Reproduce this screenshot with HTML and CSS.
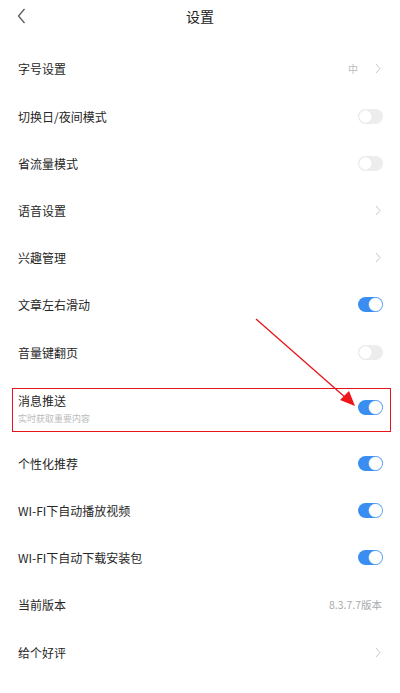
FILE: index.html
```html
<!DOCTYPE html>
<html lang="zh-CN">
<head>
  <meta charset="UTF-8">
  <meta name="viewport" content="width=device-width, initial-scale=1.0">
  <title>设置</title>
  <link rel="stylesheet" href="styles.css">
</head>
<body>
  <header class="top-bar">
    <span class="back">
      <svg width="9" height="16" viewBox="0 0 9 16"><polyline points="7.5,1 1.5,8 7.5,15" fill="none" stroke="#555" stroke-width="1.2"/></svg>
    </span>
    <h1>设置</h1>
  </header>

  <div class="settings">
    <div class="row">
      <span class="label">字号设置</span>
      <span class="extra">
        <span class="value">中</span>
        <svg class="arrow" width="6" height="11" viewBox="0 0 6 11"><polyline points="1,1 5,5.5 1,10" fill="none" stroke="#c8c8c8" stroke-width="1"/></svg>
      </span>
    </div>
    <div class="row">
      <span class="label">切换日/夜间模式</span>
      <span class="switch"></span>
    </div>
    <div class="row">
      <span class="label">省流量模式</span>
      <span class="switch"></span>
    </div>
    <div class="row">
      <span class="label">语音设置</span>
      <svg class="arrow" width="6" height="11" viewBox="0 0 6 11"><polyline points="1,1 5,5.5 1,10" fill="none" stroke="#c8c8c8" stroke-width="1"/></svg>
    </div>
    <div class="row">
      <span class="label">兴趣管理</span>
      <svg class="arrow" width="6" height="11" viewBox="0 0 6 11"><polyline points="1,1 5,5.5 1,10" fill="none" stroke="#c8c8c8" stroke-width="1"/></svg>
    </div>
    <div class="row">
      <span class="label">文章左右滑动</span>
      <span class="switch on"></span>
    </div>
    <div class="row">
      <span class="label">音量键翻页</span>
      <span class="switch"></span>
    </div>
    <div class="row tall">
      <div class="marked"></div>
      <div class="text">
        <span class="label">消息推送</span>
        <span class="sub">实时获取重要内容</span>
      </div>
      <span class="switch on"></span>
    </div>
    <div class="row">
      <span class="label">个性化推荐</span>
      <span class="switch on"></span>
    </div>
    <div class="row">
      <span class="label">WI-FI下自动播放视频</span>
      <span class="switch on"></span>
    </div>
    <div class="row">
      <span class="label">WI-FI下自动下载安装包</span>
      <span class="switch on"></span>
    </div>
    <div class="row">
      <span class="label">当前版本</span>
      <span class="version">8.3.7.7版本</span>
    </div>
    <div class="row">
      <span class="label">给个好评</span>
      <svg class="arrow" width="6" height="11" viewBox="0 0 6 11"><polyline points="1,1 5,5.5 1,10" fill="none" stroke="#c8c8c8" stroke-width="1"/></svg>
    </div>
  </div>

  <svg class="pointer" width="400" height="693" viewBox="0 0 400 693">
    <line x1="256" y1="319" x2="346" y2="398" stroke="#e8141b" stroke-width="1.3"/>
    <polygon points="355,406 340,400 349,391" fill="#f0141b"/>
  </svg>
</body>
</html>
```

FILE: styles.css
```css
body {
  margin: 0;
  padding: 0;
  background-color: #fff;
  font-family: "Noto Sans CJK SC", "Noto Sans", sans-serif;
  color: #333;
  position: relative;
  width: 400px;
  height: 693px;
  overflow: hidden;
}
.top-bar {
  height: 32px;
  display: flex;
  align-items: center;
  justify-content: center;
  position: relative;
}
.top-bar h1 {
  margin: 0;
  font-size: 14px;
  font-weight: normal;
  color: #222;
}
.back {
  position: absolute;
  left: 17px;
  top: 8px;
  display: flex;
}
.settings {
  margin-top: 13.4px;
}
.row {
  height: 47.2px;
  padding: 0 17px 0 18px;
  display: flex;
  align-items: center;
  justify-content: space-between;
  position: relative;
}
.row.tall {
  height: 64px;
}
.label {
  font-size: 12px;
  line-height: 17px;
  color: #262626;
}
.text {
  display: flex;
  flex-direction: column;
  margin-top: 1px;
}
.sub {
  font-size: 9px;
  line-height: 13px;
  color: #bbb;
  margin-top: 3px;
}
.marked {
  position: absolute;
  left: 12px;
  right: 9px;
  top: 12px;
  height: 42px;
  border: 1.5px solid #e8141b;
}
.extra {
  display: flex;
  align-items: center;
}
.value {
  font-size: 10px;
  color: #bbb;
  margin-right: 17px;
}
.arrow {
  margin-right: 2px;
}
.version {
  font-size: 10.5px;
  color: #aaa;
  margin-right: 1px;
}
.switch {
  width: 25px;
  height: 15px;
  border-radius: 8px;
  background-color: #ededed;
  position: relative;
  box-sizing: border-box;
}
.switch::after {
  content: "";
  position: absolute;
  left: 1px;
  top: 1px;
  width: 13px;
  height: 13px;
  border-radius: 50%;
  background-color: #fff;
  box-shadow: 0 0 1px rgba(0, 0, 0, 0.15);
}
.switch.on {
  background-color: #3a8ef2;
}
.switch.on::after {
  left: 11px;
  box-shadow: 0 0 0 0.5px #9cc6f5;
}
.pointer {
  position: absolute;
  left: 0;
  top: 0;
  pointer-events: none;
}
```
